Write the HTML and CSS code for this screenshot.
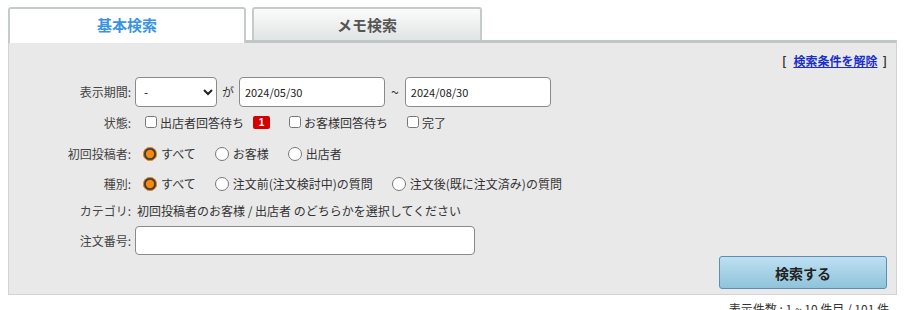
FILE: index.html
```html
<!DOCTYPE html>
<html>
<head>
  <title>お問い合わせ検索</title>
  <link rel="stylesheet" href="styles.css">
</head>
<body>
  <div class="tabs">
    <div class="tab active">基本検索</div>
    <div class="tab">メモ検索</div>
  </div>

  <form class="panel">
    <div class="reset">[<a href="#">検索条件を解除</a>]</div>

    <div class="row r1">
      <span class="lbl">表示期間:</span>
      <div class="field">
        <select class="sel">
          <option>-</option>
        </select>
        <span class="sep">が</span>
        <input type="text" class="date" value="2024/05/30">
        <span class="sep wave">~</span>
        <input type="text" class="date" value="2024/08/30">
      </div>
    </div>

    <div class="row r2">
      <span class="lbl">状態:</span>
      <div class="field opts cbs">
        <label class="opt"><input type="checkbox">出店者回答待ち<span class="badge">1</span></label>
        <label class="opt"><input type="checkbox">お客様回答待ち</label>
        <label class="opt"><input type="checkbox">完了</label>
      </div>
    </div>

    <div class="row r3">
      <span class="lbl">初回投稿者:</span>
      <div class="field opts">
        <label class="opt"><input type="radio" name="poster" checked>すべて</label>
        <label class="opt"><input type="radio" name="poster">お客様</label>
        <label class="opt"><input type="radio" name="poster">出店者</label>
      </div>
    </div>

    <div class="row r4">
      <span class="lbl">種別:</span>
      <div class="field opts">
        <label class="opt"><input type="radio" name="kind" checked>すべて</label>
        <label class="opt"><input type="radio" name="kind">注文前(注文検討中)の質問</label>
        <label class="opt"><input type="radio" name="kind">注文後(既に注文済み)の質問</label>
      </div>
    </div>

    <div class="row r5">
      <span class="lbl">カテゴリ:</span>
      <div class="field note">初回投稿者のお客様 / 出店者 のどちらかを選択してください</div>
    </div>

    <div class="row r6">
      <span class="lbl">注文番号:</span>
      <div class="field">
        <input type="text" class="order">
      </div>
    </div>

    <div class="actions">
      <button type="submit" class="search-btn">検索する</button>
    </div>
  </form>

  <div class="count">表示件数 : 1 ~ 10 件目 / 101 件</div>
</body>
</html>
```

FILE: styles.css
```css
    body {
      font-family: "Noto Sans CJK JP", "Liberation Sans", sans-serif;
      font-size: 12px;
      color: #333;
      margin: 7px 8px 0;
      padding: 0;
      background-color: #fff;
    }

    /* tabs */
    .tabs {
      display: flex;
      align-items: flex-start;
      gap: 6px;
      height: 33px;
    }

    .tab {
      box-sizing: border-box;
      width: 230px;
      height: 33px;
      border: 2px solid #c5cbcb;
      border-bottom: none;
      border-radius: 3px 3px 0 0;
      background: linear-gradient(#fbfbfb, #e1e4e4);
      color: #555;
      font-size: 15px;
      font-weight: bold;
      text-align: center;
      line-height: 32px;
    }

    .tab.active {
      position: relative;
      z-index: 1;
      width: 238px;
      height: 36px;
      background: #fff;
      color: #3a93e0;
    }

    /* panel */
    .panel {
      background-color: #e9e9e9;
      border: 1px solid #d3d3d3;
      border-top: 3px solid #c0c6c6;
      padding: 10px 0 5px;
      margin: 0;
    }

    .reset {
      height: 16px;
      line-height: 16px;
      text-align: right;
      padding-right: 9px;
      font-weight: bold;
      color: #333;
    }

    .reset a {
      color: #1a2fc9;
      margin: 0 5px 0 7px;
    }

    .row {
      display: flex;
      align-items: center;
    }

    .r1 {
      margin-top: 7px;
      height: 31px;
    }

    .r2 { height: 30px; }
    .r3 { height: 33px; }
    .r4 { height: 27px; }
    .r5 { height: 27px; }
    .r6 { height: 32px; }

    .lbl {
      width: 122px;
      text-align: right;
      color: #444;
    }

    .field {
      display: flex;
      align-items: center;
      margin-left: 4px;
    }

    .sel,
    .date,
    .order {
      box-sizing: border-box;
      height: 30px;
      border: 1px solid #8a8a8a;
      border-radius: 4px;
      background-color: #fff;
      margin: 0;
    }

    .sel {
      width: 82px;
      padding: 0 4px;
      font-family: inherit;
      font-size: 12px;
      color: #222;
    }

    .sep {
      margin: 0 5px;
      font-size: 12px;
    }

    .wave {
      margin: 0 6px;
      font-size: 14px;
    }

    .date {
      width: 146px;
      padding: 0 5px;
      font-family: "Noto Sans CJK JP", sans-serif;
      font-size: 11px;
      color: #222;
    }

    .order {
      width: 340px;
      height: 29px;
    }

    .opts {
      gap: 19px;
      margin-left: 12px;
    }

    .cbs {
      margin-left: 14px;
      gap: 19px;
    }

    .opt {
      display: flex;
      align-items: center;
    }

    .opt input[type="radio"] {
      width: 14px;
      height: 14px;
      margin: 0 4px 0 0;
      accent-color: #f7890f;
    }

    .opt input[type="checkbox"] {
      width: 12px;
      height: 12px;
      margin: 0 3px 0 0;
    }

    .badge {
      display: inline-block;
      width: 17px;
      height: 13px;
      line-height: 13px;
      margin-left: 9px;
      border-radius: 2px;
      background-color: #d40000;
      color: #fff;
      font-family: "Liberation Sans", sans-serif;
      font-size: 10px;
      font-weight: bold;
      text-align: center;
    }

    .note {
      margin-left: 6px;
    }

    .actions {
      display: flex;
      justify-content: flex-end;
      padding-right: 9px;
    }

    .search-btn {
      width: 168px;
      height: 33px;
      border: 1px solid #5b8db6;
      border-radius: 3px;
      background: linear-gradient(#bee0f2, #8fc3da);
      font-family: inherit;
      font-size: 14px;
      font-weight: bold;
      color: #222;
      cursor: pointer;
    }

    .count {
      text-align: right;
      padding-right: 8px;
      margin-top: 5px;
      color: #333;
    }
```
